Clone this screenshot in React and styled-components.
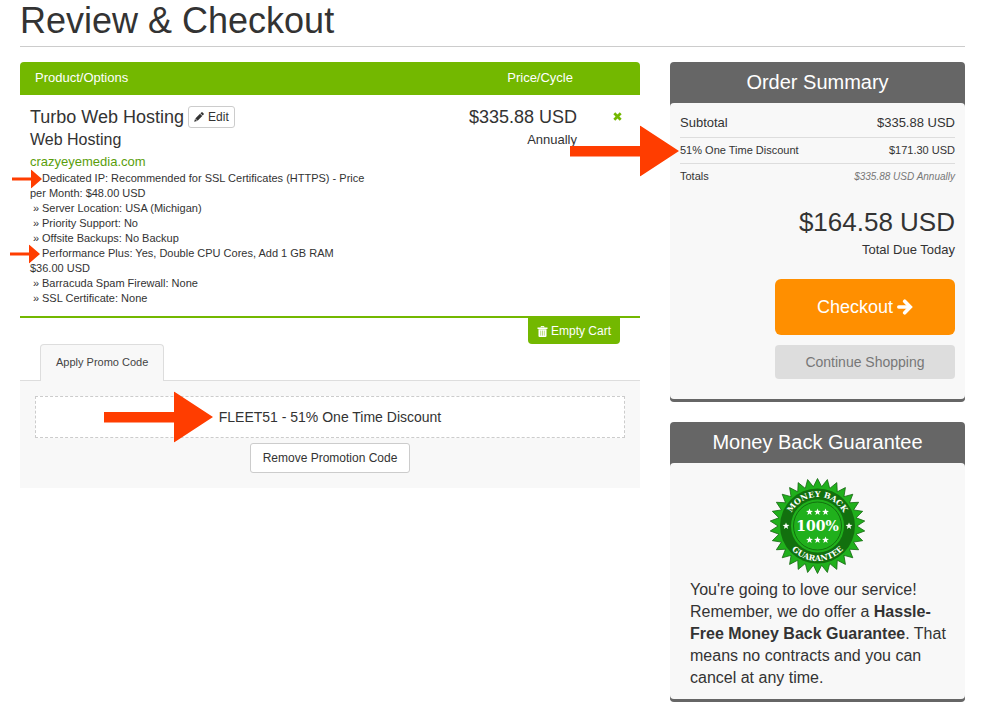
import React from "react";
import styled, { createGlobalStyle } from "styled-components";

const GlobalStyle = createGlobalStyle`
  *, *::before, *::after { box-sizing: border-box; }
  body {
    margin: 0;
    background: #fff;
    color: #333;
    font-family: "Liberation Sans", Arial, sans-serif;
    font-size: 13px;
    line-height: 20px;
  }
  button { font-family: inherit; cursor: pointer; }
`;

const Page = styled.div`
  padding: 0 16px 6px 20px;
`;

const PageTitle = styled.h1`
  margin: 0 0 15px;
  padding: 1px 0 5px;
  border-bottom: 1px solid #ccc;
  font-size: 36px;
  line-height: 40px;
  font-weight: 400;
`;

const Columns = styled.div`
  display: grid;
  grid-template-columns: minmax(0, 124fr) minmax(0, 59fr);
  gap: 30px;
  align-items: start;
`;

const CartTable = styled.table`
  width: 100%;
  table-layout: fixed;
  border-collapse: separate;
  border-spacing: 0;
  border-bottom: 2px solid #73b800;
`;

const HeadCell = styled.th`
  width: ${(p) => p.$width || "auto"};
  height: 33px;
  padding: 0 14px 2px 15px;
  background: #73b800;
  color: #fff;
  font-size: 13px;
  font-weight: 400;
  text-align: ${(p) => p.$align || "left"};
  &:first-child { border-top-left-radius: 4px; }
  &:last-child { border-top-right-radius: 4px; }
`;

const Cell = styled.td`
  padding: 11px 10px 10px;
  vertical-align: top;
  text-align: ${(p) => p.$align || "left"};
`;

const ProductLine = styled.div`
  display: flex;
  align-items: center;
  gap: 4px;
  font-size: 18px;
  line-height: 22px;
  white-space: nowrap;
`;

const EditButton = styled.button`
  display: inline-flex;
  align-items: center;
  gap: 4px;
  height: 22px;
  padding: 0 5px;
  border: 1px solid #ccc;
  border-radius: 3px;
  background: #fff;
  color: #333;
  font-size: 12px;
`;

const ProductGroup = styled.div`
  font-size: 16px;
  line-height: 24px;
`;

const DomainLink = styled.a`
  display: block;
  color: #5a9e0b;
  font-size: 13px;
  line-height: 19px;
  text-decoration: none;
`;

const OptionList = styled.ul`
  margin: 0;
  padding: 0;
  list-style: none;
  font-size: 11px;
  line-height: 15px;
`;

const Marker = styled.span`
  position: relative;
  display: inline-block;
  width: 12px;
  text-align: center;
`;

const Price = styled.div`
  font-size: 18px;
  line-height: 22px;
`;

const Cycle = styled.div`
  font-size: 13px;
  line-height: 24px;
`;

const RemoveItem = styled.button`
  display: inline-flex;
  padding: 6px 8px;
  border: 0;
  background: none;
  color: #73b800;
`;

const CartActions = styled.div`
  display: flex;
  justify-content: flex-end;
  padding-right: 20px;
`;

const EmptyButton = styled.button`
  display: inline-flex;
  align-items: center;
  gap: 3px;
  height: 26px;
  padding: 0 9px;
  border: 0;
  border-radius: 0 0 4px 4px;
  background: #73b800;
  color: #fff;
  font-size: 12px;
`;

const Tabs = styled.div`
  display: flex;
  padding: 0 20px;
  border-bottom: 1px solid #ddd;
`;

const Tab = styled.button`
  height: 37px;
  margin-bottom: -1px;
  padding: 0 15px 2px;
  border: 1px solid #ddd;
  border-bottom: 0;
  border-radius: 4px 4px 0 0;
  background: #f8f8f8;
  color: #444;
  font-size: 11px;
`;

const PromoPanel = styled.div`
  display: flex;
  flex-direction: column;
  align-items: center;
  gap: 5px;
  padding: 15px;
  background: #f8f8f8;
`;

const PromoBox = styled.div`
  width: 100%;
  padding: 10px;
  border: 1px dashed #ccc;
  background: #fff;
  font-size: 14px;
  text-align: center;
`;

const PromoText = styled.span`
  position: relative;
`;

const RemoveButton = styled.button`
  height: 30px;
  padding: 0 12px;
  border: 1px solid #ccc;
  border-radius: 3px;
  background: #fff;
  color: #333;
  font-size: 12px;
`;

const Sidebar = styled.aside`
  display: flex;
  flex-direction: column;
  gap: 20px;
`;

const Card = styled.section`
  border-radius: 4px;
  border-bottom: 3px solid #666;
  background: #666;
`;

const CardTitle = styled.h2`
  margin: 0;
  height: 41px;
  color: #fff;
  font-size: 20px;
  line-height: 41px;
  font-weight: 400;
  text-align: center;
`;

const CardBody = styled.div`
  padding: ${(p) => p.$padding};
  border-radius: 4px;
  background: #f8f8f8;
`;

const SummaryTable = styled.table`
  width: 100%;
  border-collapse: separate;
  border-spacing: 0;
`;

const SummaryRow = styled.tr`
  font-size: ${(p) => (p.$large ? 13 : 11)}px;
  & > * {
    position: relative;
    height: ${(p) => (p.$large ? 35 : 26)}px;
    padding: ${(p) => (p.$large ? "5px 0 0" : "0 0 1px")};
    border-bottom: 1px solid #ddd;
    font-weight: 400;
  }
  &:last-child > * { border-bottom-color: transparent; }
  th { text-align: left; }
  td { text-align: right; }
`;

const Recurring = styled.em`
  color: #777;
  font-size: 10px;
`;

const TotalDue = styled.div`
  margin: 14px 0 19px;
  text-align: right;
`;

const TotalAmount = styled.div`
  font-size: 26px;
  line-height: 36px;
`;

const Actions = styled.div`
  display: flex;
  flex-direction: column;
  gap: 10px;
  width: 180px;
  margin-left: auto;
`;

const CheckoutButton = styled.button`
  display: flex;
  align-items: center;
  justify-content: center;
  gap: 4px;
  height: 56px;
  border: 0;
  border-radius: 6px;
  background: #ff8f00;
  color: #fff;
  font-size: 18px;
`;

const ContinueButton = styled.button`
  height: 34px;
  border: 0;
  border-radius: 4px;
  background: #ddd;
  color: #777;
  font-size: 14px;
`;

const Seal = styled.svg`
  display: block;
  width: 96px;
  height: 96px;
  margin: 0 auto 5px;
`;

const SealText = styled.text`
  fill: #fff;
  font-family: "DejaVu Serif", serif;
  font-weight: 700;
  font-size: ${(p) => p.$size}px;
  text-anchor: middle;
`;

const Guarantee = styled.p`
  margin: 0;
  padding-left: 4px;
  font-size: 16px;
  line-height: 22px;
`;

const PointerSvg = styled.svg`
  position: absolute;
  z-index: 1;
  top: 50%;
  right: ${(p) => p.$right};
  width: ${(p) => p.$width}px;
  height: ${(p) => p.$height}px;
  transform: translateY(-50%);
  fill: #ff3d00;
  pointer-events: none;
`;

function SmallPointer({ right }) {
  return (
    <PointerSvg $right={right} $width={30} $height={19} viewBox="0 0 30 19" aria-hidden="true">
      <path d="M0 8h19V0l11 9.500-11 9.500V11H0z" />
    </PointerSvg>
  );
}

function LargePointer({ right }) {
  return (
    <PointerSvg $right={right} $width={109} $height={51} viewBox="0 0 109 51" aria-hidden="true">
      <path d="M0 20.500h70V0l39 25.500L70 51V31H0z" />
    </PointerSvg>
  );
}

function PencilIcon() {
  return (
    <svg width="10" height="10" viewBox="0 0 12 12" fill="currentColor" aria-hidden="true">
      <path d="M8.700.600c.5-.5 1.200-.5 1.700 0l1 1c.5.5.5 1.200 0 1.700l-1 1-2.700-2.700zM7.200 2.100l2.700 2.700-5.600 5.600-2.700-2.700zM1.200 8.300l2.500 2.500L.200 11.800z" />
    </svg>
  );
}

function TrashIcon() {
  return (
    <svg width="11" height="11" viewBox="0 0 10 11" aria-hidden="true">
      <path d="M3.500 1.500V.6h3v.9" fill="none" stroke="currentColor" strokeWidth="1" />
      <path d="M0 1.500h10v1.500H0zM1 3.300h8V10a1 1 0 0 1-1 1H2a1 1 0 0 1-1-1z" fill="currentColor" />
      <path d="M3.200 4.600v5M5 4.600v5M6.800 4.600v5" stroke="#73b800" strokeWidth="0.500" />
    </svg>
  );
}

function CrossIcon() {
  return (
    <svg width="9" height="9" viewBox="0 0 9 9" aria-hidden="true">
      <path d="M1.300 1.300l6.400 6.400M7.700 1.300l-6.400 6.400" stroke="currentColor" strokeWidth="2.700" />
    </svg>
  );
}

function ArrowIcon() {
  return (
    <svg width="16" height="16" viewBox="0 0 16 16" fill="none" stroke="currentColor" aria-hidden="true">
      <path d="M1.800 8H12" strokeWidth="3.600" strokeLinecap="round" />
      <path d="M7.700 2.200L13.300 8l-5.600 5.800" strokeWidth="3.600" strokeLinecap="round" strokeLinejoin="miter" />
    </svg>
  );
}

function points(count, outer, inner, cx, cy) {
  return Array.from({ length: count * 2 }, (_, i) => {
    const r = i % 2 ? inner : outer;
    const a = (i * Math.PI) / count - Math.PI / 2;
    return `${(cx + r * Math.cos(a)).toFixed(2)},${(cy + r * Math.sin(a)).toFixed(2)}`;
  }).join(" ");
}

const STARS = [
  [39.5, 34], [47.5, 34], [55.5, 34],
  [39.5, 62], [47.5, 62], [55.5, 62],
  [16, 48], [79, 48],
];

function GuaranteeSeal() {
  return (
    <Seal viewBox="0 0 96 96" role="img" aria-label="100% money back guarantee">
      <defs>
        <path id="seal-top" d="M18.500 48a29 29 0 0 1 58 0" />
        <path id="seal-bottom" d="M12.500 48a35 35 0 0 0 70 0" />
      </defs>
      <polygon points={points(30, 47.5, 39.5, 47.5, 48)} fill="#20b01c" stroke="#14670f" strokeWidth="0.8" />
      <circle cx="47.500" cy="48" r="37.500" fill="#12700e" />
      <circle cx="47.500" cy="48" r="26.500" fill="#20b01c" />
      <circle cx="47.500" cy="48" r="24" fill="none" stroke="#12700e" strokeWidth="1" />
      {STARS.map(([x, y]) => (
        <polygon key={`${x}-${y}`} points={points(5, 3.6, 1.5, x, y)} fill="#fff" />
      ))}
      <SealText $size={8}>
        <textPath href="#seal-top" startOffset="50%">MONEY BACK</textPath>
      </SealText>
      <SealText $size={8}>
        <textPath href="#seal-bottom" startOffset="50%">GUARANTEE</textPath>
      </SealText>
      <SealText $size={14} x="47.500" y="53">100%</SealText>
    </Seal>
  );
}

const OPTIONS = [
  { text: "Dedicated IP: Recommended for SSL Certificates (HTTPS) - Price per Month: $48.00 USD", pointer: "0" },
  { text: "Server Location: USA (Michigan)" },
  { text: "Priority Support: No" },
  { text: "Offsite Backups: No Backup" },
  { text: "Performance Plus: Yes, Double CPU Cores, Add 1 GB RAM", price: "$36.00 USD", pointer: "2px" },
  { text: "Barracuda Spam Firewall: None" },
  { text: "SSL Certificate: None" },
];

function Option({ text, price, pointer }) {
  return (
    <li>
      <Marker>{pointer ? <>&nbsp;<SmallPointer right={pointer} /></> : "»"}</Marker>
      {text}
      {price && <><br />{price}</>}
    </li>
  );
}

function Cart() {
  return (
    <CartTable>
      <thead>
        <tr>
          <HeadCell scope="col" $width="58%">Product/Options</HeadCell>
          <HeadCell scope="col" $align="right">Price/Cycle</HeadCell>
          <HeadCell aria-label="Remove" $width="53px" />
        </tr>
      </thead>
      <tbody>
        <tr>
          <Cell>
            <ProductLine>
              Turbo Web Hosting
              <EditButton type="button"><PencilIcon />Edit</EditButton>
            </ProductLine>
            <ProductGroup>Web Hosting</ProductGroup>
            <DomainLink href="#domain">crazyeyemedia.com</DomainLink>
            <OptionList>
              {OPTIONS.map((o) => <Option key={o.text} {...o} />)}
            </OptionList>
          </Cell>
          <Cell $align="right">
            <Price>$335.88 USD</Price>
            <Cycle>Annually</Cycle>
          </Cell>
          <Cell $align="right">
            <RemoveItem type="button" aria-label="Remove item"><CrossIcon /></RemoveItem>
          </Cell>
        </tr>
      </tbody>
    </CartTable>
  );
}

export default function App() {
  return (
    <Page>
      <GlobalStyle />
      <PageTitle>Review &amp; Checkout</PageTitle>
      <Columns>
        <main>
          <Cart />
          <CartActions>
            <EmptyButton type="button"><TrashIcon />Empty Cart</EmptyButton>
          </CartActions>
          <Tabs role="tablist">
            <Tab type="button" role="tab" aria-selected="true" id="promo-tab" aria-controls="promo-panel">
              Apply Promo Code
            </Tab>
          </Tabs>
          <PromoPanel role="tabpanel" id="promo-panel" aria-labelledby="promo-tab">
            <PromoBox>
              <PromoText>
                <LargePointer right="calc(100% + 6px)" />
                FLEET51 - 51% One Time Discount
              </PromoText>
            </PromoBox>
            <RemoveButton type="button">Remove Promotion Code</RemoveButton>
          </PromoPanel>
        </main>
        <Sidebar>
          <Card>
            <CardTitle>Order Summary</CardTitle>
            <CardBody $padding="0 10px 20px">
              <SummaryTable>
                <tbody>
                  <SummaryRow $large>
                    <th scope="row">Subtotal</th>
                    <td>$335.88 USD</td>
                  </SummaryRow>
                  <SummaryRow>
                    <th scope="row"><LargePointer right="calc(100% + 1px)" />51% One Time Discount</th>
                    <td>$171.30 USD</td>
                  </SummaryRow>
                  <SummaryRow>
                    <th scope="row">Totals</th>
                    <td><Recurring>$335.88 USD Annually</Recurring></td>
                  </SummaryRow>
                </tbody>
              </SummaryTable>
              <TotalDue>
                <TotalAmount>$164.58 USD</TotalAmount>
                <div>Total Due Today</div>
              </TotalDue>
              <Actions>
                <CheckoutButton type="button">Checkout<ArrowIcon /></CheckoutButton>
                <ContinueButton type="button">Continue Shopping</ContinueButton>
              </Actions>
            </CardBody>
          </Card>
          <Card>
            <CardTitle>Money Back Guarantee</CardTitle>
            <CardBody $padding="15px 16px 10px">
              <GuaranteeSeal />
              <Guarantee>
                You're going to love our service! Remember, we do offer a{" "}
                <strong>Hassle-Free Money Back Guarantee</strong>. That means no
                contracts and you can cancel at any time.
              </Guarantee>
            </CardBody>
          </Card>
        </Sidebar>
      </Columns>
    </Page>
  );
}
